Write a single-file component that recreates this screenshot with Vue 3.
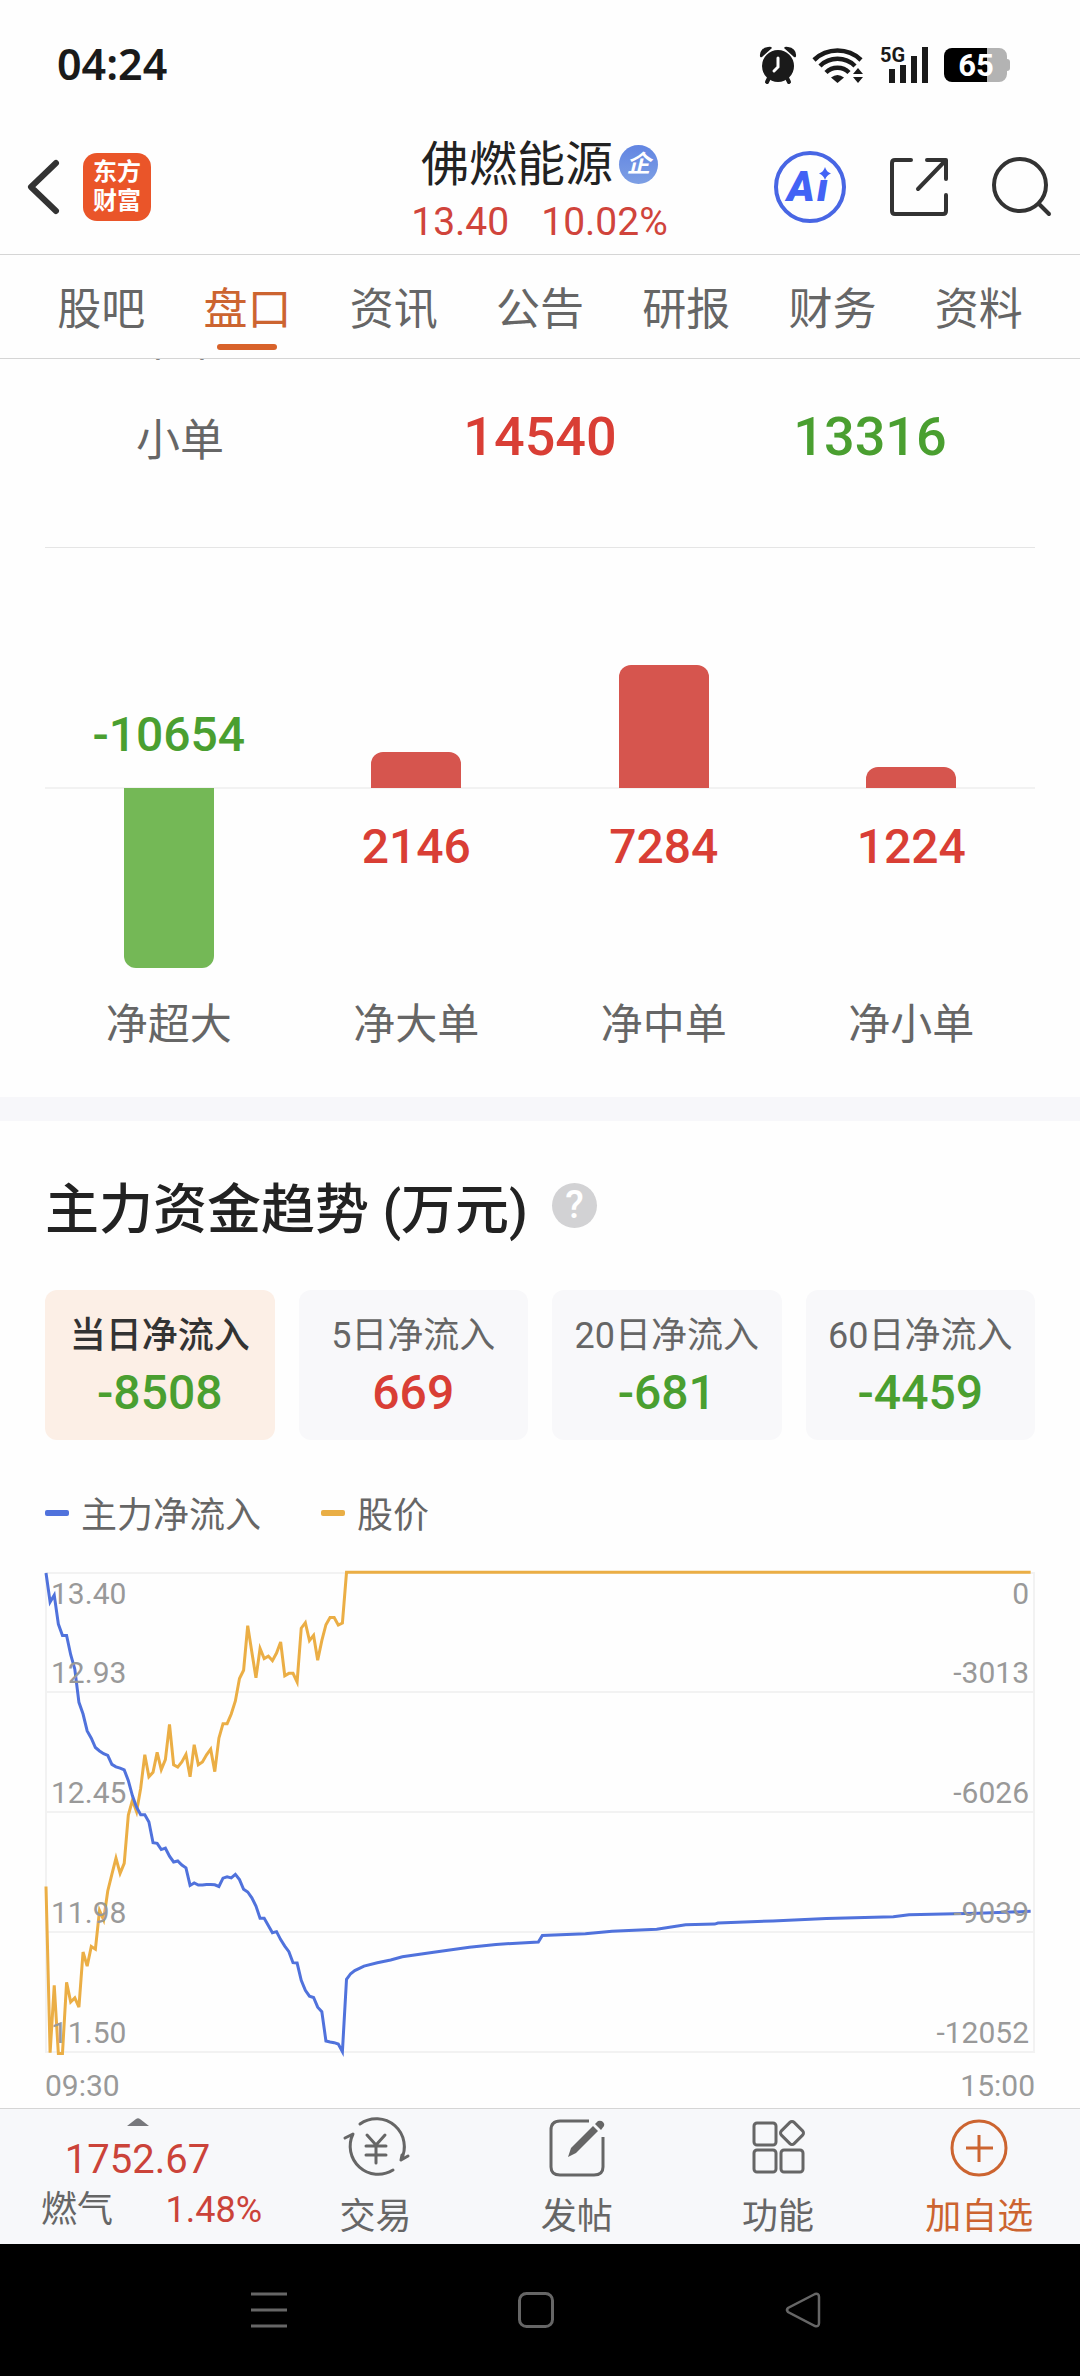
<template>
  <div class="app">
    <div class="status-bar">
      <span class="clock">04:24</span>
      <div class="status-icons">
        <svg class="icon-alarm" viewBox="0 0 38 38">
          <path d="M1 10a8 8 0 0 1 8-9q3-1 4 1L3 11q-2 1-2-1zM37 10a8 8 0 0 0-8-9q-3-1-4 1l10 9q2 1 2-1z" fill="#1a1a1a" />
          <path d="M10 32l-2 4M28 32l2 4" stroke="#1a1a1a" stroke-width="4" stroke-linecap="round" />
          <circle cx="19" cy="20" r="16" fill="#1a1a1a" />
          <path d="M19 12v9l-4 4" fill="none" stroke="#fff" stroke-width="3" stroke-linecap="round" />
        </svg>
        <svg class="icon-wifi" viewBox="0 0 51 36">
          <g fill="none" stroke="#1a1a1a" stroke-width="4.500">
            <path d="M1 13a34 34 0 0 1 47 0" />
            <path d="M7 19a25 25 0 0 1 35 0" />
            <path d="M13 25.500a16.500 16.500 0 0 1 23 0" />
          </g>
          <path d="M18 30.500q6.500-5 13 0L24.500 36z" fill="#1a1a1a" />
          <path d="M40 27l5-6 5 6zM40 30l5 6 5-6z" fill="#1a1a1a" />
        </svg>
        <svg class="icon-signal" viewBox="0 0 48 38">
          <text x="0" y="16" class="signal-text">5G</text>
          <path d="M9 23h6v14h-6zM20 19h6v18h-6zM31 10h6v27h-6zM42 1h6v36h-6z" fill="#1a1a1a" />
        </svg>
        <svg class="icon-battery" viewBox="0 0 66 34">
          <path d="M43 0h12a8 8 0 0 1 8 8v3q3 0 3 3v6q0 3-3 3v3a8 8 0 0 1-8 8H43z" fill="#b3b3b3" />
          <path d="M43 0H8a8 8 0 0 0-8 8v18a8 8 0 0 0 8 8h35z" fill="#000" />
          <text x="32" y="28" text-anchor="middle" class="battery-text">65</text>
        </svg>
      </div>
    </div>

    <header class="header">
      <div class="header-left">
        <button class="icon-btn" aria-label="返回">
          <svg class="icon-back" viewBox="0 0 32 54">
            <path d="M29 3L4 27l25 24" fill="none" stroke="#333" stroke-width="6" stroke-linecap="round" stroke-linejoin="round" />
          </svg>
        </button>
        <a class="logo" href="#"><span>东方</span><span>财富</span></a>
      </div>
      <div class="header-title">
        <div class="stock-name">佛燃能源<span class="stock-badge">企</span></div>
        <div class="stock-price"><span>13.40</span><span>10.02%</span></div>
      </div>
      <div class="header-right">
        <button class="icon-btn" aria-label="AI">
          <svg class="icon-ai" viewBox="0 0 72 72">
            <text y="50" class="ai-text"><tspan x="13">A</tspan><tspan x="43">i</tspan></text>
            <path d="M42 12h18v17H42z" fill="#fefefe" />
            <path d="M51 16q1.500 5 6 6.500-4.500 1.500-6 6.500-1.500-5-6-6.500 4.500-1.500 6-6.500z" fill="#4263f5" />
            <circle cx="36" cy="36" r="34" fill="none" stroke="#4866e4" stroke-width="4" />
          </svg>
        </button>
        <button class="icon-btn" aria-label="分享">
          <svg class="icon-share" viewBox="0 0 58 58">
            <g fill="none" stroke="#333" stroke-width="4" stroke-linecap="round" stroke-linejoin="round">
              <path d="M21 2H5q-3 0-3 3v48q0 3 3 3h48q3 0 3-3V37" />
              <path d="M37 2h19v19M55 3L28 31" />
            </g>
          </svg>
        </button>
        <button class="icon-btn" aria-label="搜索">
          <svg class="icon-search" viewBox="0 0 60 60">
            <g fill="none" stroke="#333" stroke-width="4" stroke-linecap="round">
              <circle cx="28" cy="28" r="26" />
              <path d="M47 47l10 10" />
            </g>
          </svg>
        </button>
      </div>
    </header>

    <nav class="tabs">
      <a
        v-for="tab in tabs"
        :key="tab"
        href="#"
        class="tab"
        :class="{ active: tab === activeTab }"
        @click.prevent="activeTab = tab"
      >{{ tab }}</a>
    </nav>

    <main class="content">
      <section class="orders">
        <table class="order-table">
          <tbody>
            <tr v-for="row in orders" :key="row.name">
              <th scope="row">{{ row.name }}</th>
              <td class="red">{{ row.buy }}</td>
              <td class="green">{{ row.sell }}</td>
            </tr>
          </tbody>
        </table>

        <div class="bars">
          <div v-for="item in netOrders" :key="item.name" class="bar-col">
            <div class="bar-up">
              <div v-if="item.value > 0" class="bar bar-red" :style="{ height: barHeight(item.value) }"></div>
              <span v-else class="bar-value green">{{ item.value }}</span>
            </div>
            <div class="bar-down">
              <div v-if="item.value < 0" class="bar bar-green" :style="{ height: barHeight(item.value) }"></div>
              <span v-else class="bar-value red">{{ item.value }}</span>
            </div>
            <div class="bar-name">{{ item.name }}</div>
          </div>
        </div>
      </section>

      <section class="trend">
        <h2 class="trend-title">
          主力资金趋势 (万元)
          <button class="help" aria-label="说明">?</button>
        </h2>

        <div class="periods">
          <button
            v-for="(p, index) in periods"
            :key="p.name"
            class="period"
            :class="{ active: index === activePeriod }"
            @click="activePeriod = index"
          >
            <span class="period-name">{{ p.name }}</span>
            <span class="period-value" :class="p.value < 0 ? 'green' : 'red'">{{ p.value }}</span>
          </button>
        </div>

        <div class="legend">
          <span class="legend-item"><i class="mark mark-blue"></i>主力净流入</span>
          <span class="legend-item"><i class="mark mark-orange"></i>股价</span>
        </div>

        <div class="chart">
          <div v-for="(row, index) in axisRows" :key="index" class="chart-row">
            <div v-for="label in row" :key="label[0]" class="chart-label">
              <span>{{ label[0] }}</span>
              <span>{{ label[1] }}</span>
            </div>
          </div>
          <svg class="chart-lines" viewBox="0 66 2964 1389" preserveAspectRatio="none">
            <polyline :points="pricePoints" stroke="#ebae45" />
            <polyline :points="flowPoints" stroke="#5072dc" />
          </svg>
        </div>
        <div class="chart-time">
          <span>09:30</span>
          <span>15:00</span>
        </div>
      </section>
    </main>

    <footer class="toolbar">
      <button class="index-info">
        <svg class="icon-caret" viewBox="0 0 22 8"><path d="M0 8L9 1q2-1.500 4 0l9 7z" fill="#77787c" /></svg>
        <span class="index-value">1752.67</span>
        <span class="index-row"><span>燃气</span><span class="index-rate">1.48%</span></span>
      </button>
      <button class="tool">
        <svg class="icon-tool" viewBox="0 0 66 60">
          <g fill="none" stroke="#666" stroke-width="3" stroke-linecap="round" stroke-linejoin="round">
            <path d="M17 6a28 28 0 0 1 41 36l7-4M58 42l1-5" />
            <path d="M50 52A28 28 0 0 1 10 16l-8 4" />
            <path d="M24 17l9 10 9-10M33 27v18M23 28h20M23 37h20" />
          </g>
        </svg>
        交易
      </button>
      <button class="tool">
        <svg class="icon-tool" viewBox="0 0 66 60">
          <path d="M45 3H16q-9 0-9 9v37q0 8 9 8h34q9 0 9-8V19" fill="none" stroke="#666" stroke-width="3" />
          <path d="M24 39l3-9 22-22 5 5-22 22z" fill="#666" />
          <path d="M51 6l3-3q3-1 5 1t1 4l-3 4z" fill="#666" />
        </svg>
        发帖
      </button>
      <button class="tool">
        <svg class="icon-tool" viewBox="0 0 66 60">
          <g fill="none" stroke="#666" stroke-width="3">
            <rect x="9" y="5" width="22" height="22" rx="3" />
            <rect x="9" y="32" width="22" height="22" rx="3" />
            <rect x="36" y="32" width="22" height="22" rx="3" />
            <rect x="38" y="6" width="18" height="18" rx="3" transform="rotate(45 47 15)" />
          </g>
        </svg>
        功能
      </button>
      <button class="tool tool-add">
        <svg class="icon-tool" viewBox="0 0 66 60">
          <g fill="none" stroke="#cc6430" stroke-width="3">
            <circle cx="33" cy="30" r="27" />
            <path d="M33 17v27M20 30h27" />
          </g>
        </svg>
        加自选
      </button>
    </footer>

    <div class="system-nav">
      <button class="icon-btn" aria-label="最近任务">
        <svg viewBox="0 0 36 36"><path d="M0 2h36M0 18h36M0 34h36" stroke="#666" stroke-width="3" /></svg>
      </button>
      <button class="icon-btn" aria-label="主页">
        <svg viewBox="0 0 36 36"><rect x="1.500" y="1.500" width="33" height="33" rx="7" fill="none" stroke="#666" stroke-width="3" /></svg>
      </button>
      <button class="icon-btn" aria-label="后退">
        <svg viewBox="0 0 36 36"><path d="M30 2L3 16q-2 2 0 4l27 14q4 1 4-3V5q0-4-4-3z" fill="none" stroke="#666" stroke-width="2.500" /></svg>
      </button>
    </div>
  </div>
</template>

<script setup>
import { ref } from 'vue';

const tabs = ['股吧', '盘口', '资讯', '公告', '研报', '财务', '资料'];
const activeTab = ref('盘口');

const orders = [
  { name: '中单', buy: '', sell: '' },
  { name: '小单', buy: 14540, sell: 13316 }
];

const netOrders = [
  { name: '净超大', value: -10654 },
  { name: '净大单', value: 2146 },
  { name: '净中单', value: 7284 },
  { name: '净小单', value: 1224 }
];

// Самый большой столбец — 180px
const maxNet = Math.max(...netOrders.map((item) => Math.abs(item.value)));
const barHeight = (value) => `${Math.round((Math.abs(value) / maxNet) * 180)}px`;

const periods = [
  { name: '当日净流入', value: -8508 },
  { name: '5日净流入', value: 669 },
  { name: '20日净流入', value: -681 },
  { name: '60日净流入', value: -4459 }
];
const activePeriod = ref(0);

const axisRows = [
  [['13.40', '0'], ['12.93', '-3013']],
  [['12.45', '-6026']],
  [['11.98', '-9039']],
  [['11.50', '-12052']]
];

// Поминутные точки, шаг по оси X одинаковый
const step = 12.35;
const price = [
  975, 1457, 1262, 1459, 1459, 1253, 1310, 1298, 1325, 1165, 1206, 1149, 1157, 1045, 1072,
  988, 940, 893, 937, 908, 768, 725, 758, 690, 593, 657, 644, 586, 636, 607, 505, 622, 629,
  614, 592, 657, 564, 622, 614, 593, 577, 642, 545, 503, 503, 475, 437, 372, 348, 219, 295,
  370, 285, 314, 307, 320, 298, 266, 364, 357, 357, 382, 226, 210, 262, 247, 319, 262, 216,
  195, 195, 217, 211, 64
];
const flow = [
  66, 150, 130, 214, 247, 247, 303, 345, 441, 475, 524, 545, 572, 582, 590, 595, 621, 628,
  632, 637, 668, 712, 745, 767, 767, 788, 848, 850, 868, 864, 887, 904, 901, 913, 921, 972,
  965, 971, 971, 969, 969, 970, 975, 951, 947, 950, 940, 955, 983, 991, 1008, 1032, 1067,
  1067, 1088, 1109, 1106, 1129, 1148, 1164, 1196, 1197, 1247, 1276, 1293, 1297, 1325, 1338,
  1423, 1426, 1428, 1432, 1454, 1244, 1228, 1219
];

const toPoints = (values) => values.map((y, i) => `${i * step},${y}`);

const pricePoints = [...toPoints(price), '2954,64'].join(' ');
const flowPoints = [
  ...toPoints(flow),
  '954,1206', '994,1196', '1034,1188', '1069,1179', '1163,1166', '1270,1151', '1350,1143',
  '1477,1136', '1489,1117', '1618,1112', '1698,1105', '1832,1099', '1919,1086', '2006,1084',
  '2016,1081', '2180,1075', '2341,1068', '2542,1063', '2589,1057', '2796,1053', '2954,1047'
].join(' ');
</script>

<style>
body {
  background: #fff;
}
</style>

<style scoped>
.app {
  display: flex;
  flex-direction: column;
  min-height: 100vh;
  background: #fefefe;
  color: #222;
  font-family: Roboto, "Noto Sans CJK SC", sans-serif;
}

button {
  margin: 0;
  padding: 0;
  border: none;
  background: none;
  color: inherit;
  font: inherit;
  cursor: pointer;
}

a {
  color: inherit;
  text-decoration: none;
}

svg {
  display: block;
  overflow: visible;
}

.red {
  color: #d93e35;
}

.green {
  color: #4a9f30;
}

.icon-btn {
  display: block;
}

/* Статус-бар */
.status-bar {
  display: flex;
  align-items: center;
  justify-content: space-between;
  height: 110px;
  padding: 10px 70px 0 57px;
}

.clock {
  font-size: 43px;
  font-weight: 600;
  font-family: "Noto Sans", sans-serif;
  line-height: 54px;
  padding-bottom: 2px;
  color: #1a1a1a;
}

.status-icons {
  display: flex;
  align-items: center;
  gap: 16px;
}

.icon-alarm {
  width: 38px;
  height: 38px;
}

.icon-wifi {
  width: 51px;
  height: 36px;
}

.icon-signal {
  width: 48px;
  height: 38px;
}

.icon-battery {
  width: 66px;
  height: 34px;
}

.signal-text {
  font-size: 20px;
  font-weight: 700;
  fill: #1a1a1a;
}

.battery-text {
  font-size: 31px;
  font-weight: 700;
  fill: #fff;
}

/* Шапка */
.header {
  display: grid;
  grid-template-columns: 1fr auto 1fr;
  align-items: center;
  height: 134px;
  padding: 0 28px 0 27px;
  border-bottom: 1px solid #d5d5d5;
}

.header-left {
  display: flex;
  align-items: center;
  gap: 24px;
}

.icon-back {
  width: 32px;
  height: 54px;
}

.logo {
  display: flex;
  flex-direction: column;
  align-items: center;
  justify-content: center;
  width: 68px;
  height: 68px;
  border-radius: 14px;
  background: #ea5529;
  color: #fff;
  font-size: 24px;
  font-weight: 700;
  line-height: 29px;
}

.header-title {
  align-self: start;
  padding-top: 17px;
}

.stock-name {
  display: flex;
  align-items: center;
  justify-content: center;
  gap: 6px;
  font-size: 48px;
  line-height: 56px;
}

.stock-badge {
  width: 39px;
  height: 39px;
  margin-bottom: 2px;
  border-radius: 50%;
  background: linear-gradient(#6285e2, #7d9fe4);
  color: #fff;
  font-size: 24px;
  font-weight: 700;
  font-style: italic;
  line-height: 38px;
  text-align: center;
}

.stock-price {
  display: flex;
  justify-content: center;
  gap: 32px;
  margin-top: 5px;
  color: #d0443b;
  font-size: 39px;
  line-height: 48px;
}

.header-right {
  display: flex;
  align-items: center;
  justify-content: flex-end;
  gap: 44px;
}

.icon-ai {
  width: 72px;
  height: 72px;
}

.ai-text {
  font-size: 42px;
  font-weight: 900;
  font-style: italic;
  fill: #4263f5;
}

.icon-share {
  width: 58px;
  height: 58px;
}

.icon-search {
  width: 60px;
  height: 60px;
}

/* Вкладки */
.tabs {
  display: flex;
  height: 103px;
  padding: 0 28px;
  border-bottom: 1px solid #d5d5d5;
}

.tab {
  position: relative;
  flex: 1;
  padding-top: 7px;
  color: #666;
  font-size: 44px;
  line-height: 96px;
  text-align: center;
}

.tab.active {
  color: #cc6430;
}

.tab.active::after {
  content: "";
  position: absolute;
  bottom: 8px;
  left: 50%;
  width: 60px;
  height: 6px;
  margin-left: -30px;
  border-radius: 3px;
  background: #d8622a;
}

/* Прокручиваемая часть */
.content {
  flex: 1;
  overflow: hidden;
}

.orders {
  padding: 0 45px 42px;
  border-bottom: 24px solid #f7f7fa;
}

.order-table {
  width: 100%;
  margin-top: -70px;
  border-collapse: collapse;
  table-layout: fixed;
}

.order-table th,
.order-table td {
  height: 96px;
  padding: 0;
  line-height: 64px;
  text-align: center;
}

.order-table th {
  padding: 4px 60px 0 0;
  color: #666;
  font-size: 44px;
  font-weight: 400;
}

.order-table td {
  padding-bottom: 4px;
  font-size: 54px;
  font-weight: 500;
}

.bars {
  display: grid;
  grid-template-columns: repeat(4, 1fr);
  margin-top: 58px;
  border-top: 1px solid #e5e5e5;
}

.bar-up,
.bar-down {
  display: flex;
  flex-direction: column;
  align-items: center;
}

.bar-up {
  justify-content: flex-end;
  height: 239px;
  border-bottom: 2px solid #f2f2f2;
}

.bar-down {
  height: 203px;
}

.bar {
  width: 90px;
}

.bar-red {
  margin-bottom: -1px;
  border-radius: 12px 12px 0 0;
  background: #d6554e;
}

.bar-green {
  margin-top: -1px;
  border-radius: 0 0 12px 12px;
  background: #74b856;
}

.bar-value {
  font-size: 48px;
  font-weight: 500;
  line-height: 56px;
}

.bar-up .bar-value {
  margin-bottom: 24px;
}

.bar-down .bar-value {
  margin-top: 30px;
}

.bar-name {
  padding-top: 3px;
  color: #666;
  font-size: 42px;
  line-height: 60px;
  text-align: center;
}

/* Тренд */
.trend {
  padding: 54px 45px 4px;
}

.trend-title {
  display: flex;
  align-items: center;
  gap: 24px;
  margin: 0;
  font-size: 54px;
  font-weight: 500;
  line-height: 72px;
}

.help {
  width: 45px;
  height: 45px;
  margin-bottom: 12px;
  border-radius: 50%;
  background: #d2d2d4;
  color: #fff;
  font-size: 38px;
  line-height: 45px;
}

.periods {
  display: grid;
  grid-template-columns: repeat(4, 1fr);
  gap: 24px;
  margin-top: 43px;
}

.period {
  display: flex;
  flex-direction: column;
  align-items: center;
  height: 150px;
  padding-top: 20px;
  border-radius: 12px;
  background: #f8f8fa;
}

.period.active {
  background: #fcefe6;
}

.period-name {
  color: #666;
  font-size: 36px;
  line-height: 52px;
  white-space: nowrap;
}

.period.active .period-name {
  color: #333;
  font-weight: 500;
}

.period-value {
  margin-top: 3px;
  font-size: 48px;
  font-weight: 500;
  line-height: 56px;
}

.legend {
  display: flex;
  gap: 60px;
  margin-top: 52px;
  color: #666;
  font-size: 36px;
  line-height: 48px;
}

.legend-item {
  display: flex;
  align-items: center;
  gap: 12px;
}

.mark {
  width: 24px;
  height: 6px;
  margin-bottom: 6px;
  border-radius: 2px;
}

.mark-blue {
  background: #5072dc;
}

.mark-orange {
  background: #e9ae45;
}

.chart {
  position: relative;
  margin-top: 32px;
  border: 2px solid #f2f2f2;
  border-top: none;
}

.chart-row {
  display: flex;
  flex-direction: column;
  justify-content: flex-end;
  height: 118px;
  border-top: 2px solid #f2f2f2;
}

.chart-row:first-child {
  justify-content: space-between;
  padding-top: 2px;
  height: 115px;
}

.chart-label {
  position: relative;
  z-index: 1;
  display: flex;
  justify-content: space-between;
  padding: 0 4px;
  color: #999;
  font-size: 30px;
  line-height: 36px;
}

.chart-lines {
  position: absolute;
  top: 1px;
  left: -1px;
  width: calc(100% + 2px);
  height: 100%;
}

.chart-lines polyline {
  fill: none;
  stroke-width: 3px;
  vector-effect: non-scaling-stroke;
}

.chart-time {
  display: flex;
  justify-content: space-between;
  margin-top: 15px;
  color: #999;
  font-size: 30px;
  line-height: 36px;
}

/* Нижняя панель */
.toolbar {
  display: flex;
  height: 135px;
  border-top: 1px solid #d5d5d5;
  background: #f7f8fa;
}

.index-info {
  display: flex;
  flex-direction: column;
  align-items: center;
  width: 275px;
  padding-top: 9px;
  color: #cb4339;
}

.icon-caret {
  width: 22px;
  height: 8px;
}

.index-value {
  margin-top: 10px;
  font-size: 40px;
  line-height: 48px;
}

.index-row {
  display: flex;
  align-items: center;
  justify-content: space-between;
  align-self: stretch;
  margin-top: 2px;
  padding: 0 13px 0 41px;
  font-size: 36px;
  line-height: 48px;
}

.index-row span:first-child {
  color: #666;
}

.tool {
  display: flex;
  flex: 1;
  flex-direction: column;
  align-items: center;
  padding-top: 9px;
  color: #666;
  font-size: 36px;
  line-height: 48px;
}

.icon-tool {
  width: 66px;
  height: 60px;
  margin-bottom: 15px;
}

.tool-add {
  color: #cc6430;
}

.system-nav {
  display: flex;
  align-items: center;
  justify-content: space-around;
  height: 132px;
  padding: 0 143px 0 135px;
  background: #000;
}

.system-nav svg {
  width: 36px;
  height: 36px;
}
</style>
